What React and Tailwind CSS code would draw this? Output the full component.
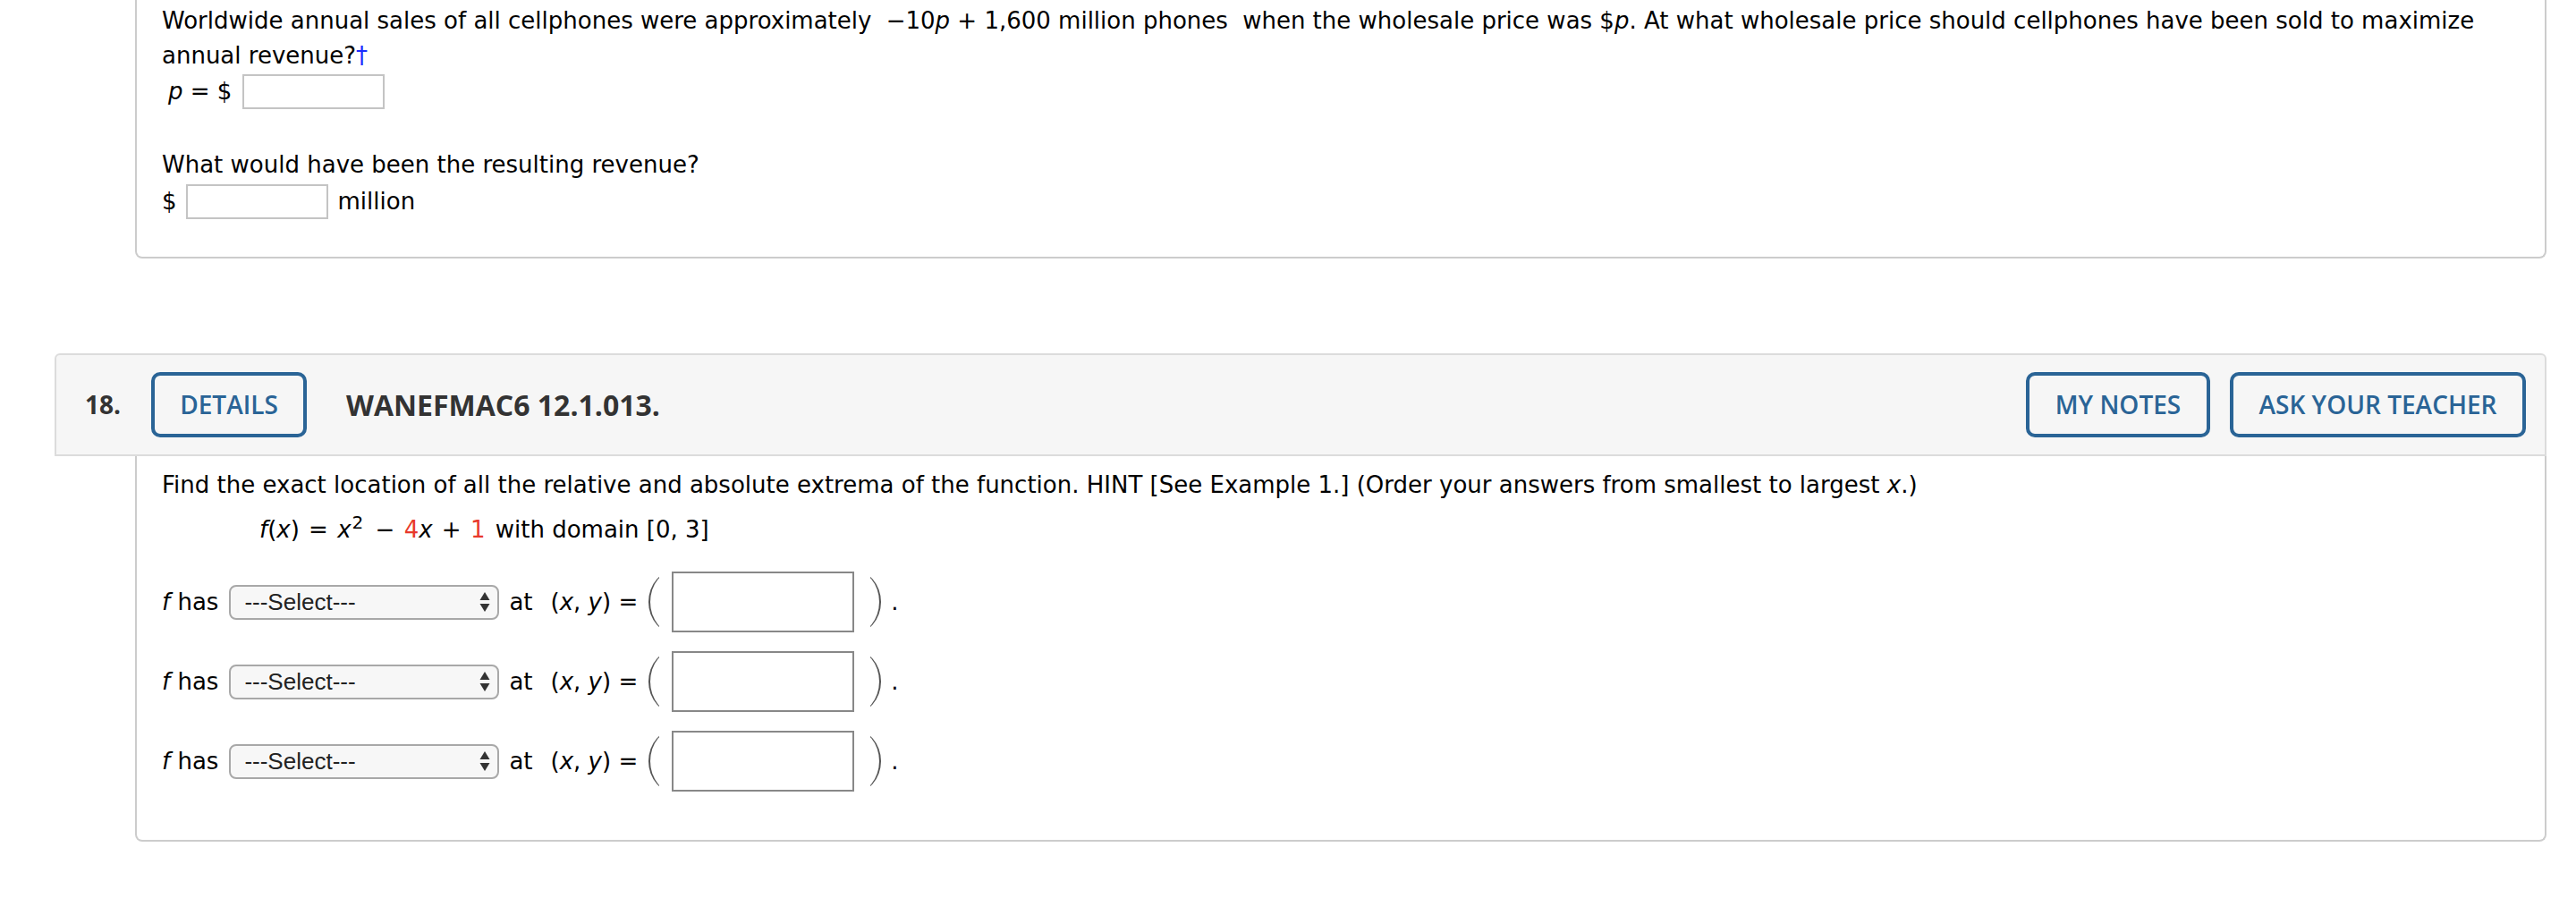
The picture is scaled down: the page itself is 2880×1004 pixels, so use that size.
import React from 'react';

const Paren = ({ side, className = '' }) => (
    <div className={`w-[12px] h-[56px] overflow-hidden shrink-0 ${className}`}>
        {side === 'left' ? (
            <div className="w-[64px] h-[72px] -mt-[8px] rounded-[50%] border-l-2 border-[#555]" />
        ) : (
            <div className="w-[64px] h-[72px] -mt-[8px] -ml-[52px] rounded-[50%] border-r-2 border-[#555]" />
        )}
    </div>
);

const SelectBox = () => (
    <div className="relative ml-[12px] w-[302px] h-[39px] shrink-0">
        <select className="appearance-none w-full h-full rounded-[8px] border-2 border-[#a8a8a8] bg-[#f7f7f7] pl-[15px] font-['Liberation_Sans',Arial,sans-serif] text-[26px] leading-[35px] text-[#222] outline-none">
            <option>---Select---</option>
            <option>an absolute maximum</option>
            <option>an absolute minimum</option>
            <option>a relative maximum</option>
            <option>a relative minimum</option>
        </select>
        <svg className="absolute right-[10px] top-[8px] pointer-events-none" width="12" height="22" viewBox="0 0 12 22">
            <path d="M6 0 L11.5 9 L0.5 9 Z" fill="#333" />
            <path d="M6 22 L11.5 13 L0.5 13 Z" fill="#333" />
        </svg>
    </div>
);

const AnswerRow = () => (
    <div className="flex items-center h-[68px]">
        <span className="whitespace-nowrap"><i>f</i> has</span>
        <SelectBox />
        <span className="ml-[11px]">at</span>
        <span className="ml-[20px] whitespace-nowrap">(<i>x</i>, <i>y</i>) =</span>
        <Paren side="left" className="ml-[12px]" />
        <input className="ml-[14px] w-[204px] h-[68px] border-2 border-[#888] bg-white outline-none shrink-0" />
        <Paren side="right" className="ml-[18px]" />
        <span className="ml-[11px]">.</span>
    </div>
);

const HeaderButton = ({ width, children }) => (
    <button className={`${width} h-[73px] border-[4px] border-[#2a6496] rounded-[10px] bg-transparent text-[28px] font-semibold text-[#2a6496] flex items-center justify-center`}>
        {children}
    </button>
);

export default function App() {
    return (
        <div className="w-[2880px] h-[1004px] overflow-hidden bg-white font-['DejaVu_Sans',Verdana,sans-serif] text-[26px] leading-[39px] text-black">
            <div className="ml-[61px] w-[2786px]">
                {/* previous question, scrolled partly out of view */}
                <div className="ml-[90px] border-2 border-t-0 border-[#cccccc] rounded-b-[8px] pl-[28px] pr-[30px] pt-[4px] pb-[42px]">
                    <p>
                        Worldwide annual sales of all cellphones were approximately
                        <span className="mx-[8px]">
                            {' '}−10<i>p</i> + 1,600 million phones{' '}
                        </span>
                        when the wholesale price was $<i>p</i>. At what wholesale price should cellphones have been sold to maximize
                        <br />
                        annual revenue?<span className="text-[#1a2cff]">†</span>
                    </p>
                    <div className="flex items-center h-[40px]">
                        <span className="pl-[7px] whitespace-nowrap"><i>p</i> = $</span>
                        <input className="ml-[12px] w-[159px] h-[39px] border-2 border-[#c4c4c4] bg-white outline-none" />
                    </div>
                    <p className="mt-[43px]">What would have been the resulting revenue?</p>
                    <div className="flex items-center h-[39px] mt-[2px]">
                        <span>$</span>
                        <input className="ml-[10px] w-[159px] h-[39px] border-2 border-[#c4c4c4] bg-white outline-none" />
                        <span className="ml-[11px]">million</span>
                    </div>
                </div>

                {/* question 18 header */}
                <div className="mt-[106px] h-[115px] border-2 border-[#dcdcdc] rounded-t-[6px] bg-[#f6f6f6] flex items-center pl-[32px] pr-[21px] font-['Open_Sans',sans-serif]">
                    <span className="text-[28px] font-bold text-[#333]">18.</span>
                    <div className="ml-[34px]">
                        <HeaderButton width="w-[174px]">DETAILS</HeaderButton>
                    </div>
                    <span className="ml-[44px] text-[32px] font-bold text-[#333]">WANEFMAC6 12.1.013.</span>
                    <div className="ml-auto flex gap-[22px]">
                        <HeaderButton width="w-[206px]">MY NOTES</HeaderButton>
                        <HeaderButton width="w-[331px]">ASK YOUR TEACHER</HeaderButton>
                    </div>
                </div>

                {/* question 18 body */}
                <div className="ml-[90px] border-2 border-t-0 border-[#cccccc] rounded-b-[8px] pl-[28px] pr-[30px] pt-[13px] pb-[54px]">
                    <p>
                        Find the exact location of all the relative and absolute extrema of the function. HINT [See Example 1.] (Order your answers from smallest to largest <i>x</i>.)
                    </p>
                    <p className="mt-[11px] pl-[109px] whitespace-nowrap">
                        <i>f</i>(<i>x</i>)<span className="mx-[2px]"> = </span><i>x</i><sup className="text-[20px] ml-[1px] mr-[3px]">2</sup><span className="mx-[2px]"> − </span><span className="text-[#e8392b]">4</span><i>x</i><span className="mx-[2px]"> + </span><span className="text-[#e8392b]">1</span><span className="ml-[3px]"> with domain [0, 3]</span>
                    </p>
                    <div className="mt-[27px] flex flex-col gap-[21px]">
                        <AnswerRow />
                        <AnswerRow />
                        <AnswerRow />
                    </div>
                </div>
            </div>
        </div>
    );
}
